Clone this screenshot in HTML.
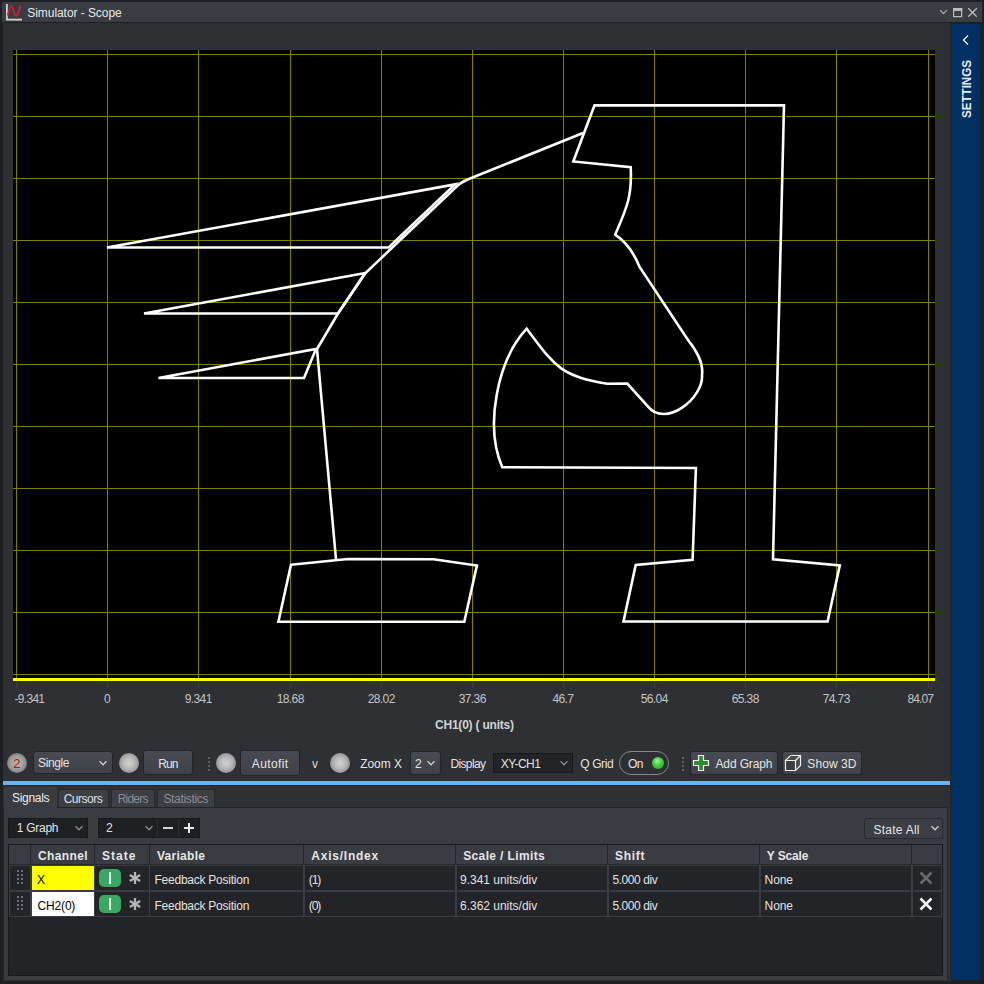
<!DOCTYPE html>
<html><head><meta charset="utf-8">
<style>
*{margin:0;padding:0;box-sizing:border-box}
html,body{width:984px;height:984px;overflow:hidden;background:#1f2023;font-family:"Liberation Sans",sans-serif;font-size:12px;color:#dcdcdc}
.a{position:absolute}
.t{position:absolute;white-space:nowrap}
.ball{position:absolute;width:20px;height:20px;border-radius:50%;background:radial-gradient(circle at 50% 50%,#d2d2d2 0%,#b8b8b8 40%,#929292 75%,#747474 100%)}
</style></head><body>
<div class="a" style="left:2px;top:2px;width:980px;height:20px;background:#3a3d42;border-radius:3px 0 0 0"></div>
<svg class="a" style="left:0;top:0" width="30" height="24" viewBox="0 0 30 24">
<path d="M6.9,4 V19.6 H22" stroke="#d8d8d8" stroke-width="1.7" fill="none"/>
<path d="M7.6,15.5 C9,11 10,6 11.5,6 C13.2,6 14,16 16,16 C18,16 19,8 21,6" stroke="#e0183a" stroke-width="1.6" fill="none"/>
</svg>
<div class="t" style="left:27.30px;top:5.64px;font-size:12px;line-height:14px;color:#e8e8e8;letter-spacing:-0.062px;">Simulator - Scope</div>
<svg class="a" style="left:930px;top:0" width="54" height="24" viewBox="930 0 54 24">
<path d="M940.2,10.2 L943.5,13.7 L946.8,10.2" stroke="#b4b4b4" stroke-width="1.2" fill="none"/>
<rect x="953.6" y="8.6" width="8" height="8" stroke="#bcbcbc" stroke-width="1.2" fill="none"/>
<rect x="953" y="8" width="9.2" height="3" fill="#bcbcbc"/>
<path d="M968.2,8.3 L976.8,16.8 M976.8,8.3 L968.2,16.8" stroke="#bcbcbc" stroke-width="1.3" fill="none"/>
</svg>
<div class="a" style="left:3px;top:23px;width:947px;height:958px;background:#2e3034;"></div>
<div class="a" style="left:950px;top:23px;width:1px;height:958px;background:#252628;"></div>
<div class="a" style="left:951px;top:24px;width:29px;height:956px;background:#003162;"></div>
<svg class="a" style="left:951px;top:24px" width="29" height="100" viewBox="951 24 29 100">
<path d="M968,35.5 L963.5,40 L968,44.5" stroke="#e8eef5" stroke-width="1.4" fill="none"/>
</svg>
<div class="t" style="left:966.5px;top:89px;transform:translate(-50%,-50%) rotate(-90deg) scaleX(0.86);font-size:13.5px;line-height:14px;font-weight:bold;color:#e6ecf2">SETTINGS</div>
<div class="a" style="left:13px;top:50px;width:922px;height:631px;background:#000;"></div>
<svg class="a" style="left:0;top:0" width="984" height="700" viewBox="0 0 984 700"><rect x="16" y="50" width="1" height="628" fill="#808000"/>
<rect x="107" y="50" width="1" height="628" fill="#808000"/>
<rect x="198" y="50" width="1" height="628" fill="#808000"/>
<rect x="290" y="50" width="1" height="628" fill="#808000"/>
<rect x="381" y="50" width="1" height="628" fill="#808000"/>
<rect x="472" y="50" width="1" height="628" fill="#808000"/>
<rect x="563" y="50" width="1" height="628" fill="#808000"/>
<rect x="654" y="50" width="1" height="628" fill="#808000"/>
<rect x="745" y="50" width="1" height="628" fill="#808000"/>
<rect x="836" y="50" width="1" height="628" fill="#808000"/>
<rect x="928" y="50" width="1" height="628" fill="#808000"/>
<rect x="13" y="54" width="922" height="1" fill="#808000"/>
<rect x="13" y="116" width="922" height="1" fill="#808000"/>
<rect x="13" y="178" width="922" height="1" fill="#808000"/>
<rect x="13" y="240" width="922" height="1" fill="#808000"/>
<rect x="13" y="302" width="922" height="1" fill="#808000"/>
<rect x="13" y="364" width="922" height="1" fill="#808000"/>
<rect x="13" y="426" width="922" height="1" fill="#808000"/>
<rect x="13" y="488" width="922" height="1" fill="#808000"/>
<rect x="13" y="550" width="922" height="1" fill="#808000"/>
<rect x="13" y="612" width="922" height="1" fill="#808000"/>
<rect x="13" y="674" width="922" height="1" fill="#808000"/>
<rect x="13" y="678" width="922" height="3" fill="#ffff00"/>
<path d="M107,247.5 L455,184.4 L388.6,247.5 Z" fill="none" stroke="#fff" stroke-width="2.6" stroke-linejoin="miter" stroke-miterlimit="4"/>
<path d="M144,313.5 L365,273 L338,313.5 Z" fill="none" stroke="#fff" stroke-width="2.6" stroke-linejoin="miter" stroke-miterlimit="4"/>
<path d="M158.5,378 L316,349 L304,378 Z" fill="none" stroke="#fff" stroke-width="2.6" stroke-linejoin="miter" stroke-miterlimit="4"/>
<path d="M583,133 L467,179.8 Q459.5,183.2 455,188 L365.5,273 L338,313.5 L317,349 L336,559.5" fill="none" stroke="#fff" stroke-width="2.6" stroke-linejoin="miter" stroke-miterlimit="4"/>
<path d="M291,564.7 L348,559 L433.5,559.3 L476.9,565.5 L464.3,621.7 L278.4,621.7 Z" fill="none" stroke="#fff" stroke-width="2.6" stroke-linejoin="miter" stroke-miterlimit="4"/>
<path d="M594.5,105.4 L784,105.4 L773,559.3 L839.8,565.4 L827.6,621.5 L623.5,621.5 L635.7,564.9 L692.6,559.7 L695.9,468 L502.3,467.2 C484.4,426.2 497.3,360.3 526.7,328.7 C553.5,364.1 559.5,376.6 607.2,383.7 L627.3,383.6 L647.4,405.9 C665.4,429.1 703.9,397.5 702.0,375.0 C703.7,361.7 695.7,349.8 688.0,340.0 L639.6,267 C636.8,260 630.5,245 615.2,234.7 C626.2,209.2 632.3,196.8 630.7,167.3 L573.3,161.5 Z" fill="none" stroke="#fff" stroke-width="2.6" stroke-linejoin="miter" stroke-miterlimit="4"/></svg>
<div class="a" style="left:16px;top:682px;width:1px;height:6px;background:#3c3e43;"></div>
<div class="a" style="left:107px;top:682px;width:1px;height:6px;background:#3c3e43;"></div>
<div class="a" style="left:198px;top:682px;width:1px;height:6px;background:#3c3e43;"></div>
<div class="a" style="left:290px;top:682px;width:1px;height:6px;background:#3c3e43;"></div>
<div class="a" style="left:381px;top:682px;width:1px;height:6px;background:#3c3e43;"></div>
<div class="a" style="left:472px;top:682px;width:1px;height:6px;background:#3c3e43;"></div>
<div class="a" style="left:563px;top:682px;width:1px;height:6px;background:#3c3e43;"></div>
<div class="a" style="left:654px;top:682px;width:1px;height:6px;background:#3c3e43;"></div>
<div class="a" style="left:745px;top:682px;width:1px;height:6px;background:#3c3e43;"></div>
<div class="a" style="left:836px;top:682px;width:1px;height:6px;background:#3c3e43;"></div>
<div class="a" style="left:928px;top:682px;width:1px;height:6px;background:#3c3e43;"></div>
<div class="t" style="left:14.50px;top:692.04px;font-size:12px;line-height:14px;color:#c4c4c4;letter-spacing:-0.700px;">-9.341</div>
<div class="t" style="left:104.00px;top:692.04px;font-size:12px;line-height:14px;color:#c4c4c4;">0</div>
<div class="t" style="left:184.70px;top:692.04px;font-size:12px;line-height:14px;color:#c4c4c4;letter-spacing:-0.600px;">9.341</div>
<div class="t" style="left:276.70px;top:692.04px;font-size:12px;line-height:14px;color:#c4c4c4;letter-spacing:-0.600px;">18.68</div>
<div class="t" style="left:367.70px;top:692.04px;font-size:12px;line-height:14px;color:#c4c4c4;letter-spacing:-0.600px;">28.02</div>
<div class="t" style="left:458.70px;top:692.04px;font-size:12px;line-height:14px;color:#c4c4c4;letter-spacing:-0.600px;">37.36</div>
<div class="t" style="left:552.40px;top:692.04px;font-size:12px;line-height:14px;color:#c4c4c4;letter-spacing:-0.600px;">46.7</div>
<div class="t" style="left:640.70px;top:692.04px;font-size:12px;line-height:14px;color:#c4c4c4;letter-spacing:-0.600px;">56.04</div>
<div class="t" style="left:731.70px;top:692.04px;font-size:12px;line-height:14px;color:#c4c4c4;letter-spacing:-0.600px;">65.38</div>
<div class="t" style="left:822.70px;top:692.04px;font-size:12px;line-height:14px;color:#c4c4c4;letter-spacing:-0.600px;">74.73</div>
<div class="t" style="left:907.50px;top:692.04px;font-size:12px;line-height:14px;color:#c4c4c4;letter-spacing:-0.875px;">84.07</div>
<div class="t" style="left:435.00px;top:717.84px;font-size:12px;line-height:14px;color:#d2d2d2;letter-spacing:-0.214px;font-weight:bold;">CH1(0) ( units)</div>
<div class="a" style="left:7px;top:753px;width:20px;height:20px;border-radius:50%;background:radial-gradient(circle closest-side,#b6b6b6 0%,#a6a6a6 50%,#939393 82%,#7a7a7a 100%)"></div>
<div class="t" style="left:13.30px;top:755.50px;font-size:13px;line-height:15px;color:#b81212;">2</div>
<div class="a" style="left:33px;top:751px;width:80px;height:23px;background:linear-gradient(#474a51,#3f4248);border:1px solid #24252a;border-radius:3px;"></div>
<div class="t" style="left:38.10px;top:756.34px;font-size:12px;line-height:14px;color:#e4e4e4;letter-spacing:-0.400px;">Single</div>
<svg class="a" style="left:97.4px;top:757.7px" width="12" height="10" viewBox="97.4 757.7 12 10"><path d="M99.9,760.9000000000001 L103.4,764.5 L106.9,760.9000000000001" stroke="#d0d0d0" stroke-width="1.3" fill="none"/></svg>
<div class="ball" style="left:119px;top:753px"></div>
<div class="a" style="left:143px;top:750px;width:50px;height:25px;background:linear-gradient(#474a51,#3f4248);border:1px solid #24252a;border-radius:3px;"></div>
<div class="t" style="left:158.30px;top:757.04px;font-size:12px;line-height:14px;color:#e4e4e4;letter-spacing:-0.950px;">Run</div>
<div class="a" style="left:208px;top:757px;width:2px;height:2px;background:#5c5e63;"></div><div class="a" style="left:208px;top:761px;width:2px;height:2px;background:#5c5e63;"></div><div class="a" style="left:208px;top:765px;width:2px;height:2px;background:#5c5e63;"></div><div class="a" style="left:208px;top:769px;width:2px;height:2px;background:#5c5e63;"></div>
<div class="ball" style="left:216px;top:753px"></div>
<div class="a" style="left:240px;top:750px;width:60px;height:26px;background:linear-gradient(#474a51,#3f4248);border:1px solid #24252a;border-radius:3px;"></div>
<div class="t" style="left:251.80px;top:757.04px;font-size:12px;line-height:14px;color:#e4e4e4;letter-spacing:0.367px;">Autofit</div>
<div class="t" style="left:311.90px;top:757.04px;font-size:12px;line-height:14px;color:#dcdcdc;">v</div>
<div class="ball" style="left:330px;top:753px"></div>
<div class="t" style="left:360.20px;top:757.04px;font-size:12px;line-height:14px;color:#e4e4e4;letter-spacing:-0.040px;">Zoom X</div>
<div class="a" style="left:410px;top:751px;width:31px;height:24px;background:linear-gradient(#474a51,#3f4248);border:1px solid #24252a;border-radius:3px;"></div>
<div class="t" style="left:415.00px;top:757.04px;font-size:12px;line-height:14px;color:#e4e4e4;">2</div>
<svg class="a" style="left:425px;top:758.3px" width="12" height="10" viewBox="425 758.3 12 10"><path d="M427.5,761.5 L431,765.0999999999999 L434.5,761.5" stroke="#d0d0d0" stroke-width="1.3" fill="none"/></svg>
<div class="t" style="left:450.40px;top:757.04px;font-size:12px;line-height:14px;color:#e4e4e4;letter-spacing:-0.617px;">Display</div>
<div class="a" style="left:493px;top:753px;width:80px;height:20px;background:#222326;border:1px solid #24252a;border-radius:3px;border-color:#17181a;border-radius:0"></div>
<div class="t" style="left:500.70px;top:757.04px;font-size:12px;line-height:14px;color:#e4e4e4;letter-spacing:-0.540px;">XY-CH1</div>
<svg class="a" style="left:558px;top:758.3px" width="12" height="10" viewBox="558 758.3 12 10"><path d="M560.5,761.5 L564,765.0999999999999 L567.5,761.5" stroke="#8e8e8e" stroke-width="1.3" fill="none"/></svg>
<div class="t" style="left:580.30px;top:757.04px;font-size:12px;line-height:14px;color:#e4e4e4;letter-spacing:-0.400px;">Q Grid</div>
<div class="a" style="left:619px;top:751px;width:50px;height:24px;border:1px solid #88898c;border-radius:12px"></div>
<div class="t" style="left:628.00px;top:757.04px;font-size:12px;line-height:14px;color:#e4e4e4;letter-spacing:-0.700px;">On</div>
<div class="a" style="left:652.2px;top:756.8px;width:12px;height:12px;border-radius:50%;background:radial-gradient(circle at 45% 35%,#9ef09e 0%,#3cd03c 45%,#22a822 100%)"></div>
<div class="a" style="left:682px;top:757px;width:2px;height:2px;background:#5c5e63;"></div><div class="a" style="left:682px;top:761px;width:2px;height:2px;background:#5c5e63;"></div><div class="a" style="left:682px;top:765px;width:2px;height:2px;background:#5c5e63;"></div><div class="a" style="left:682px;top:769px;width:2px;height:2px;background:#5c5e63;"></div>
<div class="a" style="left:690px;top:751px;width:88px;height:24px;background:linear-gradient(#474a51,#3f4248);border:1px solid #24252a;border-radius:3px;"></div>
<svg class="a" style="left:690px;top:752px" width="22" height="22" viewBox="690 752 22 22">
<path d="M698.5,755.5 H703.5 V760.5 H708.5 V765.5 H703.5 V770.5 H698.5 V765.5 H693.5 V760.5 H698.5 Z" fill="#2f8a2f" stroke="#f0f0f0" stroke-width="1.2"/>
</svg>
<div class="t" style="left:715.50px;top:757.04px;font-size:12px;line-height:14px;color:#e4e4e4;letter-spacing:-0.138px;">Add Graph</div>
<div class="a" style="left:782px;top:751px;width:80px;height:24px;background:linear-gradient(#474a51,#3f4248);border:1px solid #24252a;border-radius:3px;"></div>
<svg class="a" style="left:783px;top:752px" width="22" height="22" viewBox="783 752 22 22">
<path d="M785.5,760.5 L790.5,755.5 H800.5 V765.5 L795.5,770.5 Z" fill="#4a4a4c" stroke="#f0f0f0" stroke-width="1.2"/>
<path d="M785.5,760.5 H795.5 V770.5 H785.5 Z" fill="#3c3c3e" stroke="#f0f0f0" stroke-width="1.2"/>
<path d="M795.5,760.5 L800.5,755.5" stroke="#f0f0f0" stroke-width="1.2"/>
</svg>
<div class="t" style="left:807.30px;top:757.04px;font-size:12px;line-height:14px;color:#e4e4e4;letter-spacing:0.083px;">Show 3D</div>
<div class="a" style="left:3px;top:781px;width:947px;height:4px;background:#6cb2ee;"></div>
<div class="a" style="left:3px;top:785px;width:947px;height:1px;background:#26272a;"></div>
<div class="a" style="left:3px;top:807px;width:945px;height:173px;background:#393c41;border:1px solid #242528;border-bottom:none"></div>
<div class="a" style="left:4px;top:787px;width:53px;height:22px;background:#393c41;border-radius:3px 3px 0 0"></div>
<div class="t" style="left:12.00px;top:790.84px;font-size:12px;line-height:14px;color:#eaeaea;letter-spacing:-0.300px;">Signals</div>
<div class="a" style="left:57.5px;top:789px;width:51.5px;height:18px;background:#3c3f44;border:1px solid #2a2b2e;border-bottom:none;border-radius:3px 3px 0 0"></div>
<div class="t" style="left:63.70px;top:791.84px;font-size:12px;line-height:14px;color:#e0e0e0;letter-spacing:-0.483px;">Cursors</div>
<div class="a" style="left:111px;top:789px;width:44px;height:18px;background:#3c3f44;border:1px solid #2a2b2e;border-bottom:none;border-radius:3px 3px 0 0"></div>
<div class="t" style="left:117.70px;top:791.84px;font-size:12px;line-height:14px;color:#8c8e92;letter-spacing:-0.780px;">Riders</div>
<div class="a" style="left:157px;top:789px;width:58px;height:18px;background:#3c3f44;border:1px solid #2a2b2e;border-bottom:none;border-radius:3px 3px 0 0"></div>
<div class="t" style="left:163.40px;top:791.84px;font-size:12px;line-height:14px;color:#8c8e92;letter-spacing:-0.322px;">Statistics</div>
<div class="a" style="left:8px;top:818px;width:80px;height:20px;background:#1f2023;border:1px solid #18191b"></div>
<div class="t" style="left:16.80px;top:821.34px;font-size:12px;line-height:14px;color:#e4e4e4;letter-spacing:-0.283px;">1 Graph</div>
<svg class="a" style="left:73.4px;top:823px" width="12" height="10" viewBox="73.4 823 12 10"><path d="M75.9,826.2 L79.4,829.8 L82.9,826.2" stroke="#8e8e8e" stroke-width="1.3" fill="none"/></svg>
<div class="a" style="left:98px;top:818px;width:102px;height:20px;background:#1f2023;border:1px solid #18191b"></div>
<div class="a" style="left:157px;top:819px;width:1px;height:18px;background:#2c2d30;"></div>
<div class="a" style="left:178px;top:819px;width:1px;height:18px;background:#2c2d30;"></div>
<div class="t" style="left:106.00px;top:821.34px;font-size:12px;line-height:14px;color:#e4e4e4;">2</div>
<svg class="a" style="left:143.4px;top:823.2px" width="12" height="10" viewBox="143.4 823.2 12 10"><path d="M145.9,826.4000000000001 L149.4,830.0 L152.9,826.4000000000001" stroke="#8e8e8e" stroke-width="1.3" fill="none"/></svg>
<div class="a" style="left:162.8px;top:826.8px;width:10.4px;height:2.6px;background:#d8d8d8;"></div>
<div class="a" style="left:183.9px;top:826.8px;width:10.2px;height:2.6px;background:#e8e8e8;"></div>
<div class="a" style="left:187.7px;top:823px;width:2.6px;height:10.2px;background:#e8e8e8;"></div>
<div class="a" style="left:863.5px;top:817.5px;width:79px;height:21px;background:#3c3f44;border:1px solid #2a2b2e;border-radius:3px"></div>
<div class="t" style="left:873.40px;top:823.04px;font-size:12px;line-height:14px;color:#e4e4e4;letter-spacing:0.263px;">State All</div>
<svg class="a" style="left:928.5px;top:823.4px" width="12" height="10" viewBox="928.5 823.4 12 10"><path d="M931.0,826.6 L934.5,830.1999999999999 L938.0,826.6" stroke="#d0d0d0" stroke-width="1.3" fill="none"/></svg>
<div class="a" style="left:8px;top:844px;width:935px;height:132px;background:#232427;border:1px solid #18191b"></div>
<div class="a" style="left:9px;top:845px;width:933px;height:19px;background:#393c41;"></div>
<div class="a" style="left:30px;top:845px;width:1px;height:19px;background:#26272a;"></div>
<div class="a" style="left:94px;top:845px;width:1px;height:19px;background:#26272a;"></div>
<div class="a" style="left:149px;top:845px;width:1px;height:19px;background:#26272a;"></div>
<div class="a" style="left:303px;top:845px;width:1px;height:19px;background:#26272a;"></div>
<div class="a" style="left:455px;top:845px;width:1px;height:19px;background:#26272a;"></div>
<div class="a" style="left:607px;top:845px;width:1px;height:19px;background:#26272a;"></div>
<div class="a" style="left:759px;top:845px;width:1px;height:19px;background:#26272a;"></div>
<div class="a" style="left:911px;top:845px;width:1px;height:19px;background:#26272a;"></div>
<div class="a" style="left:9px;top:864px;width:933px;height:1px;background:#26272a;"></div>
<div class="a" style="left:9px;top:865px;width:933px;height:52px;background:#393c41;"></div>
<div class="a" style="left:10px;top:866px;width:20px;height:24px;background:#232427;"></div>
<div class="a" style="left:32px;top:866px;width:62px;height:24px;background:#232427;"></div>
<div class="a" style="left:95px;top:866px;width:54px;height:24px;background:#232427;"></div>
<div class="a" style="left:150px;top:866px;width:153px;height:24px;background:#232427;"></div>
<div class="a" style="left:305px;top:866px;width:150px;height:24px;background:#232427;"></div>
<div class="a" style="left:456.5px;top:866px;width:150.5px;height:24px;background:#232427;"></div>
<div class="a" style="left:609px;top:866px;width:150px;height:24px;background:#232427;"></div>
<div class="a" style="left:760.5px;top:866px;width:150.5px;height:24px;background:#232427;"></div>
<div class="a" style="left:912.5px;top:866px;width:28.5px;height:24px;background:#232427;"></div>
<div class="a" style="left:10px;top:892px;width:20px;height:24px;background:#232427;"></div>
<div class="a" style="left:32px;top:892px;width:62px;height:24px;background:#232427;"></div>
<div class="a" style="left:95px;top:892px;width:54px;height:24px;background:#232427;"></div>
<div class="a" style="left:150px;top:892px;width:153px;height:24px;background:#232427;"></div>
<div class="a" style="left:305px;top:892px;width:150px;height:24px;background:#232427;"></div>
<div class="a" style="left:456.5px;top:892px;width:150.5px;height:24px;background:#232427;"></div>
<div class="a" style="left:609px;top:892px;width:150px;height:24px;background:#232427;"></div>
<div class="a" style="left:760.5px;top:892px;width:150.5px;height:24px;background:#232427;"></div>
<div class="a" style="left:912.5px;top:892px;width:28.5px;height:24px;background:#232427;"></div>
<div class="t" style="left:38.10px;top:848.84px;font-size:12px;line-height:14px;color:#e6e6e6;letter-spacing:0.350px;font-weight:bold;">Channel</div>
<div class="t" style="left:102.00px;top:848.84px;font-size:12px;line-height:14px;color:#e6e6e6;letter-spacing:1.050px;font-weight:bold;">State</div>
<div class="t" style="left:156.90px;top:848.84px;font-size:12px;line-height:14px;color:#e6e6e6;letter-spacing:0.300px;font-weight:bold;">Variable</div>
<div class="t" style="left:311.30px;top:848.84px;font-size:12px;line-height:14px;color:#e6e6e6;letter-spacing:0.767px;font-weight:bold;">Axis/Index</div>
<div class="t" style="left:463.20px;top:848.84px;font-size:12px;line-height:14px;color:#e6e6e6;letter-spacing:0.369px;font-weight:bold;">Scale / Limits</div>
<div class="t" style="left:615.00px;top:848.84px;font-size:12px;line-height:14px;color:#e6e6e6;letter-spacing:0.700px;font-weight:bold;">Shift</div>
<div class="t" style="left:766.80px;top:848.84px;font-size:12px;line-height:14px;color:#e6e6e6;letter-spacing:-0.133px;font-weight:bold;">Y Scale</div>
<div class="a" style="left:17px;top:870px;width:2px;height:2px;background:#6c6e73;"></div>
<div class="a" style="left:17px;top:874px;width:2px;height:2px;background:#6c6e73;"></div>
<div class="a" style="left:17px;top:878px;width:2px;height:2px;background:#6c6e73;"></div>
<div class="a" style="left:17px;top:882px;width:2px;height:2px;background:#6c6e73;"></div>
<div class="a" style="left:21px;top:870px;width:2px;height:2px;background:#6c6e73;"></div>
<div class="a" style="left:21px;top:874px;width:2px;height:2px;background:#6c6e73;"></div>
<div class="a" style="left:21px;top:878px;width:2px;height:2px;background:#6c6e73;"></div>
<div class="a" style="left:21px;top:882px;width:2px;height:2px;background:#6c6e73;"></div>
<div class="a" style="left:32px;top:866px;width:62px;height:24px;background:#ffff00;"></div>
<div class="t" style="left:37.10px;top:872.84px;font-size:12px;line-height:14px;color:#000;">X</div>
<div class="a" style="left:99px;top:869px;width:22px;height:18px;background:#3aa863;border-radius:5px"></div>
<div class="a" style="left:109.3px;top:872px;width:2px;height:12px;background:#f2f2f2;"></div>
<svg class="a" style="left:127px;top:870px" width="16" height="16" viewBox="-8 -8 16 16"><g stroke="#b4b4b4" stroke-width="2.3" stroke-linecap="butt"><path d="M0,-6 V6"/><path d="M-5.2,-3 L5.2,3"/><path d="M-5.2,3 L5.2,-3"/></g></svg>
<div class="t" style="left:154.50px;top:872.84px;font-size:12px;line-height:14px;color:#e2e2e2;letter-spacing:-0.244px;">Feedback Position</div>
<div class="t" style="left:308.80px;top:872.84px;font-size:12px;line-height:14px;color:#e2e2e2;letter-spacing:-1.100px;">(1)</div>
<div class="t" style="left:460.00px;top:872.84px;font-size:12px;line-height:14px;color:#e2e2e2;letter-spacing:-0.014px;">9.341 units/div</div>
<div class="t" style="left:612.40px;top:872.84px;font-size:12px;line-height:14px;color:#e2e2e2;letter-spacing:-0.412px;">5.000 div</div>
<div class="t" style="left:764.60px;top:872.84px;font-size:12px;line-height:14px;color:#e2e2e2;letter-spacing:-0.133px;">None</div>
<svg class="a" style="left:918px;top:870px" width="16" height="16" viewBox="-8 -8 16 16"><path d="M-5.5,-5.5 L5.5,5.5 M5.5,-5.5 L-5.5,5.5" stroke="#6a6a6a" stroke-width="2.6"/></svg>
<div class="a" style="left:17px;top:896px;width:2px;height:2px;background:#6c6e73;"></div>
<div class="a" style="left:17px;top:900px;width:2px;height:2px;background:#6c6e73;"></div>
<div class="a" style="left:17px;top:904px;width:2px;height:2px;background:#6c6e73;"></div>
<div class="a" style="left:17px;top:908px;width:2px;height:2px;background:#6c6e73;"></div>
<div class="a" style="left:21px;top:896px;width:2px;height:2px;background:#6c6e73;"></div>
<div class="a" style="left:21px;top:900px;width:2px;height:2px;background:#6c6e73;"></div>
<div class="a" style="left:21px;top:904px;width:2px;height:2px;background:#6c6e73;"></div>
<div class="a" style="left:21px;top:908px;width:2px;height:2px;background:#6c6e73;"></div>
<div class="a" style="left:32px;top:892px;width:62px;height:24px;background:#ffffff;"></div>
<div class="t" style="left:37.60px;top:898.84px;font-size:12px;line-height:14px;color:#000;letter-spacing:-0.180px;">CH2(0)</div>
<div class="a" style="left:99px;top:895px;width:22px;height:18px;background:#3aa863;border-radius:5px"></div>
<div class="a" style="left:109.3px;top:898px;width:2px;height:12px;background:#f2f2f2;"></div>
<svg class="a" style="left:127px;top:896px" width="16" height="16" viewBox="-8 -8 16 16"><g stroke="#b4b4b4" stroke-width="2.3" stroke-linecap="butt"><path d="M0,-6 V6"/><path d="M-5.2,-3 L5.2,3"/><path d="M-5.2,3 L5.2,-3"/></g></svg>
<div class="t" style="left:154.50px;top:898.84px;font-size:12px;line-height:14px;color:#e2e2e2;letter-spacing:-0.244px;">Feedback Position</div>
<div class="t" style="left:308.80px;top:898.84px;font-size:12px;line-height:14px;color:#e2e2e2;letter-spacing:-1.100px;">(0)</div>
<div class="t" style="left:460.00px;top:898.84px;font-size:12px;line-height:14px;color:#e2e2e2;letter-spacing:-0.014px;">6.362 units/div</div>
<div class="t" style="left:612.40px;top:898.84px;font-size:12px;line-height:14px;color:#e2e2e2;letter-spacing:-0.412px;">5.000 div</div>
<div class="t" style="left:764.60px;top:898.84px;font-size:12px;line-height:14px;color:#e2e2e2;letter-spacing:-0.133px;">None</div>
<svg class="a" style="left:918px;top:896px" width="16" height="16" viewBox="-8 -8 16 16"><path d="M-5.5,-5.5 L5.5,5.5 M5.5,-5.5 L-5.5,5.5" stroke="#f4f4f4" stroke-width="2.6"/></svg>
</body></html>
